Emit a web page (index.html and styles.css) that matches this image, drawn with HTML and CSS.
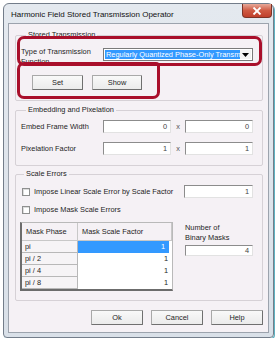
FILE: index.html
```html
<!DOCTYPE html>
<html lang="en">
<head>
    <meta charset="UTF-8">
    <title>Harmonic Field Stored Transmission Operator</title>
    <link rel="stylesheet" href="styles.css">
</head>
<body>
    <div class="window">
        <div class="titlebar">
            <span class="title">Harmonic Field Stored Transmission Operator</span>
            <span class="close-btn">
                <svg width="10" height="8" viewBox="0 0 10 8">
                    <path d="M1.5 0.5 L8.5 7.5 M8.5 0.5 L1.5 7.5" stroke="#fff" stroke-width="1.8" fill="none"/>
                </svg>
            </span>
        </div>

        <div class="client">
            <!-- Stored transmission -->
            <div class="group group-stored">
                <span class="group-title">Stored Transmission</span>
                <div class="field-row type-row">
                    <span class="field-label two-line">Type of Transmission Function</span>
                    <div class="combo">
                        <span class="combo-text">Regularly Quantized Phase-Only Transmission</span>
                        <span class="combo-btn">
                            <svg width="7" height="4" viewBox="0 0 7 4"><path d="M0 0 H7 L3.5 4 Z" fill="#000"/></svg>
                        </span>
                    </div>
                </div>
                <div class="btn-row">
                    <button class="btn btn-set">Set</button>
                    <button class="btn btn-show">Show</button>
                </div>
                <div class="mark mark-type"></div>
                <div class="mark mark-buttons"></div>
            </div>

            <!-- Embedding -->
            <div class="group group-embed">
                <span class="group-title">Embedding and Pixelation</span>
                <div class="field-row pair-row first">
                    <span class="field-label">Embed Frame Width</span>
                    <span class="input">0</span>
                    <span class="times">x</span>
                    <span class="input">0</span>
                </div>
                <div class="field-row pair-row">
                    <span class="field-label">Pixelation Factor</span>
                    <span class="input">1</span>
                    <span class="times">x</span>
                    <span class="input">1</span>
                </div>
            </div>

            <!-- Scale errors -->
            <div class="group group-scale">
                <span class="group-title">Scale Errors</span>
                <div class="check-row linear-row">
                    <span class="checkbox"></span>
                    <span class="check-label">Impose Linear Scale Error by Scale Factor</span>
                    <span class="input input-scale">1</span>
                </div>
                <div class="check-row mask-row">
                    <span class="checkbox"></span>
                    <span class="check-label">Impose Mask Scale Errors</span>
                </div>
                <div class="mask-area">
                    <div class="mask-table">
                        <div class="cell head">Mask Phase</div>
                        <div class="cell head">Mask Scale Factor</div>
                        <div class="cell phase">pi</div>
                        <div class="cell factor selected">1</div>
                        <div class="cell phase">pi / 2</div>
                        <div class="cell factor">1</div>
                        <div class="cell phase">pi / 4</div>
                        <div class="cell factor">1</div>
                        <div class="cell phase">pi / 8</div>
                        <div class="cell factor">1</div>
                    </div>
                    <div class="masks-side">
                        <span class="masks-label">Number of<br>Binary Masks</span>
                        <span class="input input-masks">4</span>
                    </div>
                </div>
            </div>

            <div class="dialog-buttons">
                <button class="btn btn-dialog">Ok</button>
                <button class="btn btn-dialog">Cancel</button>
                <button class="btn btn-dialog">Help</button>
            </div>
        </div>
    </div>
</body>
</html>
```

FILE: styles.css
```css
body {
    margin: 0;
    background: #fff;
    font-family: "Liberation Sans", Arial, sans-serif;
    font-size: 8px;
    color: #1e1e1e;
}
.window {
    box-sizing: border-box;
    width: 271px;
    height: 335px;
    margin: 3px 0 0 3px;
    border: 1px solid #737d8a;
    border-radius: 6px 6px 4px 4px;
    background: linear-gradient(#e4e9ef, #d9e0e8);
    padding: 0 4px 4px 4px;
    display: flex;
    flex-direction: column;
    box-shadow: 1px 1px 0 #5fb3c2;
}
.titlebar {
    height: 19px;
    display: flex;
    justify-content: space-between;
    align-items: flex-start;
}
.title {
    padding: 6px 0 0 3px;
    line-height: 10px;
    color: #111;
}
.close-btn {
    box-sizing: border-box;
    width: 30px;
    height: 14px;
    margin-right: -3px;
    border: 1px solid #7d3326;
    border-top: none;
    border-radius: 0 0 4px 4px;
    background: linear-gradient(#e7a898, #cf5a43 50%, #c0402c);
    display: flex;
    align-items: center;
    justify-content: center;
}
.client {
    flex: 1;
    background: #f5f1f5;
    border: 1px solid #9ca3ad;
    padding: 11px 5px 0 6px;
    display: flex;
    flex-direction: column;
    font-size: 7.4px;
}
.group {
    position: relative;
    border: 1px solid #d6d1d6;
    border-radius: 2px;
}
.group-title {
    display: block;
    width: fit-content;
    margin: -6px 0 0 5px;
    padding: 0 2px;
    line-height: 10px;
    background: #f5f1f5;
    color: #222;
}
.group-stored {
    padding: 0 7px 10px 5px;
}
.group-embed {
    margin-top: 9px;
    padding: 0 9px 10px 5px;
}
.group-scale {
    margin-top: 8px;
    padding: 0 9px 9px 3px;
}
.field-row {
    display: flex;
    align-items: center;
}
.field-label {
    width: 82px;
    flex: none;
    line-height: 10px;
}
.type-row {
    margin-top: 7px;
    align-items: flex-start;
}
.two-line {
    height: 20px;
}
.combo {
    box-sizing: border-box;
    width: 150px;
    height: 13px;
    margin-top: 1px;
    border: 1px solid #7a7a7a;
    background: #fff;
    display: flex;
    padding: 1px;
}
.combo-text {
    flex: 1;
    background: #3399ff;
    color: #fff;
    line-height: 9px;
    white-space: nowrap;
    overflow: hidden;
    padding-left: 1px;
}
.combo-btn {
    width: 11px;
    display: flex;
    align-items: center;
    justify-content: center;
    background: #f2f2f2;
}
.btn-row {
    display: flex;
    gap: 9px;
    margin: 8px 0 0 11px;
}
.btn {
    box-sizing: border-box;
    height: 15px;
    padding: 0;
    font-family: inherit;
    font-size: 7.4px;
    color: #1e1e1e;
    border: 1px solid #a9a9a9;
    border-right-color: #6f6f6f;
    border-bottom-color: #6f6f6f;
    border-radius: 1px;
    background: linear-gradient(#f9f9f9, #ebebeb);
}
.btn-set {
    width: 51px;
}
.btn-show {
    width: 50px;
}
.mark {
    position: absolute;
    box-sizing: border-box;
    border: 3px solid #a90f2b;
    border-radius: 7px;
}
.mark-type {
    left: 1px;
    top: 0;
    width: 245px;
    height: 30px;
}
.mark-buttons {
    left: 1px;
    top: 26px;
    width: 143px;
    height: 37px;
    border-top-right-radius: 4px;
}
.input {
    box-sizing: border-box;
    height: 13px;
    background: #fff;
    border: 1px solid #e2e2e2;
    border-top-color: #8c8c8c;
    border-left-color: #8c8c8c;
    text-align: right;
    padding-right: 3px;
    line-height: 11px;
    color: #444;
}
.pair-row {
    margin-top: 9px;
}
.pair-row.first {
    margin-top: 5px;
}
.pair-row .input {
    width: 68px;
}
.times {
    width: 14px;
    text-align: center;
    color: #555;
}
.check-row {
    display: flex;
    align-items: center;
}
.checkbox {
    box-sizing: border-box;
    width: 8px;
    height: 8px;
    margin: 0 4px 0 3px;
    background: #fff;
    border: 1px solid #8e8f8f;
    box-shadow: inset 1px 1px 0 #dcdcdc;
}
.check-label {
    white-space: nowrap;
}
.linear-row {
    margin-top: 6px;
}
.linear-row .check-label {
    flex: 1;
}
.input-scale {
    width: 69px;
    flex: none;
}
.mask-row {
    margin-top: 7px;
}
.mask-area {
    display: flex;
    margin-top: 8px;
}
.mask-table {
    box-sizing: border-box;
    width: 154px;
    display: grid;
    grid-template-columns: 56px 1fr;
    grid-template-rows: 18px repeat(4, 12px);
    margin-left: 1px;
    border: 1px solid #b9b9b9;
    border-left: 2px solid #6c6c6c;
    border-bottom: 2px solid #6c6c6c;
    background: #fff;
}
.cell {
    line-height: 12px;
    white-space: nowrap;
    overflow: hidden;
}
.cell.head {
    background: #f5f1f5;
    line-height: 17px;
    padding-left: 4px;
    border-right: 1px solid #c8c8c8;
    border-bottom: 1px solid #c8c8c8;
}
.cell.phase {
    background: #f6f4f6;
    padding-left: 3px;
    border-right: 1px solid #b8b8b8;
    border-bottom: 1px solid #b8b8b8;
    line-height: 11px;
}
.cell.factor {
    text-align: right;
    padding-right: 4px;
}
.cell.selected {
    background: #3399ff;
    color: #fff;
    margin-right: 3px;
}
.masks-side {
    display: flex;
    flex-direction: column;
    margin-left: 12px;
    padding-top: 1px;
}
.masks-label {
    line-height: 10px;
}
.input-masks {
    width: 68px;
    height: 11px;
    margin-top: 2px;
    line-height: 9px;
}
.dialog-buttons {
    display: flex;
    justify-content: flex-end;
    gap: 8px;
    margin-top: 9px;
}
.btn-dialog {
    width: 52px;
}
```
